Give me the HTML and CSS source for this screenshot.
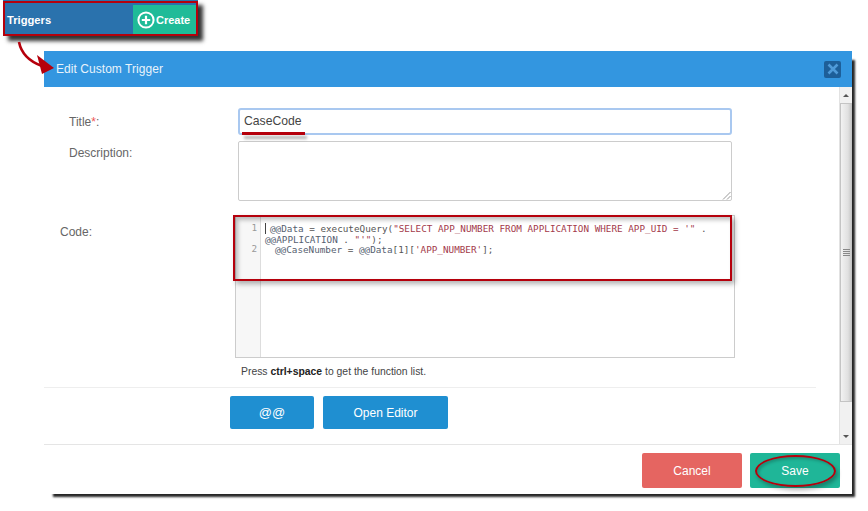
FILE: index.html
```html
<!DOCTYPE html>
<html lang="en">
<head>
<meta charset="utf-8">
<title>Edit Custom Trigger</title>
<link rel="stylesheet" href="styles.css">
</head>
<body>
<div class="toolbar">
  <div class="toolbar-title">Triggers</div>
  <div class="toolbar-create">
    <svg class="plus-icon" width="18" height="18" viewBox="0 0 18 18"><circle cx="9" cy="9" r="7.6" fill="none" stroke="#fff" stroke-width="2"/><path d="M9 4.8v8.4M4.8 9h8.4" stroke="#fff" stroke-width="2.2" fill="none"/></svg>
    <span>Create</span>
  </div>
</div>

<svg class="arrow" width="40" height="34" viewBox="0 0 40 34"><path d="M1 1C3 11 10 20 24 25" fill="none" stroke="#b5000c" stroke-width="2.6"/><path d="M19 14L36 27 24 33Z" fill="#b5000c"/></svg>

<div class="dialog">
  <div class="dialog-head">
    <span class="dialog-title">Edit Custom Trigger</span>
    <div class="close-btn"><svg width="12" height="12" viewBox="0 0 12 12"><path d="M1.500 1.500l9 9M10.500 1.500l-9 9" stroke="#4f9bd9" stroke-width="2.6" fill="none"/></svg></div>
  </div>
  <div class="dialog-body">
    <div class="form">
      <div class="row row-title">
        <label class="label">Title<span class="req">*</span>:</label>
        <div class="input focus">CaseCode</div>
      </div>
      <div class="row row-desc">
        <label class="label">Description:</label>
        <div class="textarea">
          <svg class="grip" width="9" height="9" viewBox="0 0 9 9"><path d="M8.500 1L1 8.500M8.500 5L5 8.500" stroke="#999" fill="none"/></svg>
        </div>
      </div>
      <div class="row row-code">
        <label class="label label-code">Code:</label>
        <div class="code-col">
          <div class="editor">
            <div class="gutter"><div class="ln ln1">1</div><div class="ln ln2">2</div></div>
            <div class="code">
              <div class="cl"><span class="cursor"></span><span class="var">@@Data</span> = executeQuery(<span class="str">"SELECT APP_NUMBER FROM APPLICATION WHERE APP_UID = '"</span> .</div>
              <div class="cl"><span class="var">@@APPLICATION</span> . <span class="str">"'"</span>);</div>
              <div class="cl cl-ind"><span class="var">@@CaseNumber</span> = <span class="var">@@Data</span>[1][<span class="str">'APP_NUMBER'</span>];</div>
            </div>
          </div>
          <div class="help">Press <b>ctrl+space</b> to get the function list.</div>
        </div>
      </div>
      <div class="tools">
        <button class="btn btn-blue btn-at">@@</button>
        <button class="btn btn-blue btn-open">Open Editor</button>
      </div>
    </div>
    <div class="scrollbar">
      <div class="sb-arrow"><span class="tri-up"></span></div>
      <div class="sb-thumb"><span class="sb-grip"></span></div>
      <div class="sb-track"></div>
      <div class="sb-arrow sb-arrow-down"><span class="tri-down"></span></div>
    </div>
  </div>
  <div class="dialog-foot">
    <button class="btn btn-cancel">Cancel</button>
    <button class="btn btn-save">Save</button>
  </div>
</div>

<div class="mark mark-toolbar"></div>
<div class="mark mark-underline"></div>
<div class="mark mark-code"></div>
<div class="mark mark-save"></div>
</body>
</html>
```

FILE: styles.css
```css
* { box-sizing: border-box; }
html, body { margin: 0; padding: 0; }
body {
  position: relative;
  width: 868px;
  height: 511px;
  overflow: hidden;
  background: #fff;
  font-family: "Liberation Sans", Arial, sans-serif;
  color: #555;
}

/* toolbar cut-out */
.toolbar {
  position: absolute;
  left: 3px;
  top: 0;
  width: 195px;
  height: 36px;
  display: flex;
  justify-content: space-between;
  background: #2a72ad;
  border: 2px solid #2a72ad;
  border-top-width: 5px;
  border-bottom-width: 2px;
  box-shadow: 5px 5px 4px rgba(0, 0, 0, .8);
}
.toolbar-title {
  padding: 8px 0 0 2px;
  color: #fff;
  font-size: 11.200px;
  font-weight: bold;
  line-height: 14px;
}
.toolbar-create {
  width: 63px;
  display: flex;
  align-items: center;
  gap: 1px;
  padding-left: 4px;
  background: #1fbb98;
  color: #fff;
  font-size: 11px;
  font-weight: bold;
}
.plus-icon { flex: none; }

.arrow { position: absolute; left: 18px; top: 41px; overflow: visible; z-index: 5; }

/* dialog */
.dialog {
  position: absolute;
  left: 44px;
  top: 51px;
  width: 808px;
  height: 443px;
  display: flex;
  flex-direction: column;
  background: #fff;
  box-shadow: 6px 6px 2px -3px rgba(0, 0, 0, .85);
}
.dialog-head {
  flex: none;
  height: 36px;
  display: flex;
  align-items: center;
  justify-content: space-between;
  padding: 0 12px;
  background: #3396e0;
  color: #e8f3fb;
  font-size: 12px;
}
.dialog-title { letter-spacing: .05px; }
.close-btn {
  width: 17px;
  height: 17px;
  display: flex;
  align-items: center;
  justify-content: center;
  margin-right: -1px;
  background: #1d5f99;
  border-radius: 2px;
}
.dialog-body {
  flex: none;
  height: 358px;
  display: flex;
  border-bottom: 1px solid #e5e5e5;
}
.form { flex: 1; padding-top: 21px; }
.row { display: flex; }
.label { font-size: 12px; line-height: 14px; color: #666; }
.req { color: #e55; }
.row-title { height: 33px; padding-left: 25px; }
.row-title .label { width: 169px; padding-top: 7px; }
.input {
  width: 494px;
  height: 27px;
  padding: 0 4px;
  border: 2px solid #a9c8f0;
  border-radius: 3px;
  font-size: 12.200px;
  line-height: 22px;
  color: #444;
}
.row-desc { height: 74px; padding-left: 25px; }
.row-desc .label { width: 169px; padding-top: 5px; }
.textarea {
  position: relative;
  width: 494px;
  height: 60px;
  border: 1px solid #ccc;
  border-radius: 2px;
}
.grip { position: absolute; right: 0; bottom: 0; }
.row-code { padding-left: 16px; }
.label-code { width: 175px; padding-top: 10px; }
.code-col { width: 500px; }
.editor {
  height: 143px;
  display: flex;
  border: 1px solid #ccc;
  background: #fff;
  font-family: "DejaVu Sans Mono", monospace;
  font-size: 9.300px;
  line-height: 10.500px;
}
.gutter {
  width: 25px;
  flex: none;
  padding-top: 7px;
  background: #f7f7f7;
  border-right: 1px solid #ddd;
  color: #999;
  text-align: right;
}
.ln { padding-right: 3px; }
.ln2 { margin-top: 10.500px; }
.code { flex: 1; padding: 7px 0 0 4px; color: #555; white-space: nowrap; }
.cl-ind { padding-left: 10px; }
.cursor { display: inline-block; width: 1px; height: 11px; margin: 0 4px 0 0; vertical-align: -2px; background: #444; }
.var { color: #556070; }
.str { color: #a33a4a; }
.help { padding: 8px 0 0 6px; font-size: 10.400px; line-height: 12px; color: #444; }
.help b { color: #222; }
.tools {
  display: flex;
  gap: 9px;
  height: 42px;
  margin: 9px 23px 0 0;
  padding: 8px 0 0 186px;
  border-top: 1px solid #eee;
  width: 772px;
}
.btn {
  border: 0;
  padding: 0;
  border-radius: 2px;
  color: #fff;
  font-family: inherit;
  font-size: 12px;
}
.btn-blue { height: 33px; background: #1f8fd1; }
.btn-at { width: 84px; font-size: 13px; }
.btn-open { width: 125px; }
.scrollbar {
  width: 13px;
  flex: none;
  display: flex;
  flex-direction: column;
  background: #f1f1f1;
  border-left: 1px solid #e2e2e2;
}
.sb-arrow { flex: none; height: 16px; display: flex; align-items: center; justify-content: center; }
.tri-up { border: 3px solid transparent; border-top: 0; border-bottom: 3px solid #555; }
.tri-down { border: 3px solid transparent; border-bottom: 0; border-top: 3px solid #555; }
.sb-thumb {
  flex: none;
  height: 299px;
  display: flex;
  align-items: center;
  justify-content: center;
  background: linear-gradient(to right, #f2f2f2, #e0e0e0 70%, #c9c9c9);
  border: 1px solid #c4c4c4;
}
.sb-track { flex: 1; }
.sb-grip { width: 7px; height: 7px; background: repeating-linear-gradient(to bottom, #888 0 1px, transparent 1px 2px); }
.dialog-foot {
  flex: 1;
  display: flex;
  justify-content: flex-end;
  gap: 8px;
  padding: 8px 12px 0 0;
}
.btn-cancel { width: 100px; height: 35px; background: #e56561; }
.btn-save { width: 90px; height: 35px; background: #1fb698; }

/* red annotations */
.mark { position: absolute; z-index: 4; }
.mark-toolbar {
  left: 3px;
  top: 1px;
  width: 195px;
  height: 35px;
  border: 2px solid #b5000c;
}
.mark-underline {
  left: 242px;
  top: 132px;
  width: 63px;
  height: 3px;
  background: #b5000c;
  box-shadow: 2px 4px 3px rgba(0, 0, 0, .3);
}
.mark-code {
  left: 233px;
  top: 215px;
  width: 499px;
  height: 66px;
  border: 2px solid #b5000c;
  box-shadow: 3px 3px 5px rgba(0, 0, 0, .3), inset 3px 3px 4px rgba(0, 0, 0, .25);
}
.mark-save {
  left: 755px;
  top: 455px;
  width: 81px;
  height: 32px;
  border: 2px solid #b5000c;
  border-radius: 50%;
  box-shadow: 2px 3px 4px rgba(0, 0, 0, .3), inset 2px 2px 3px rgba(0, 0, 0, .2);
}
```
